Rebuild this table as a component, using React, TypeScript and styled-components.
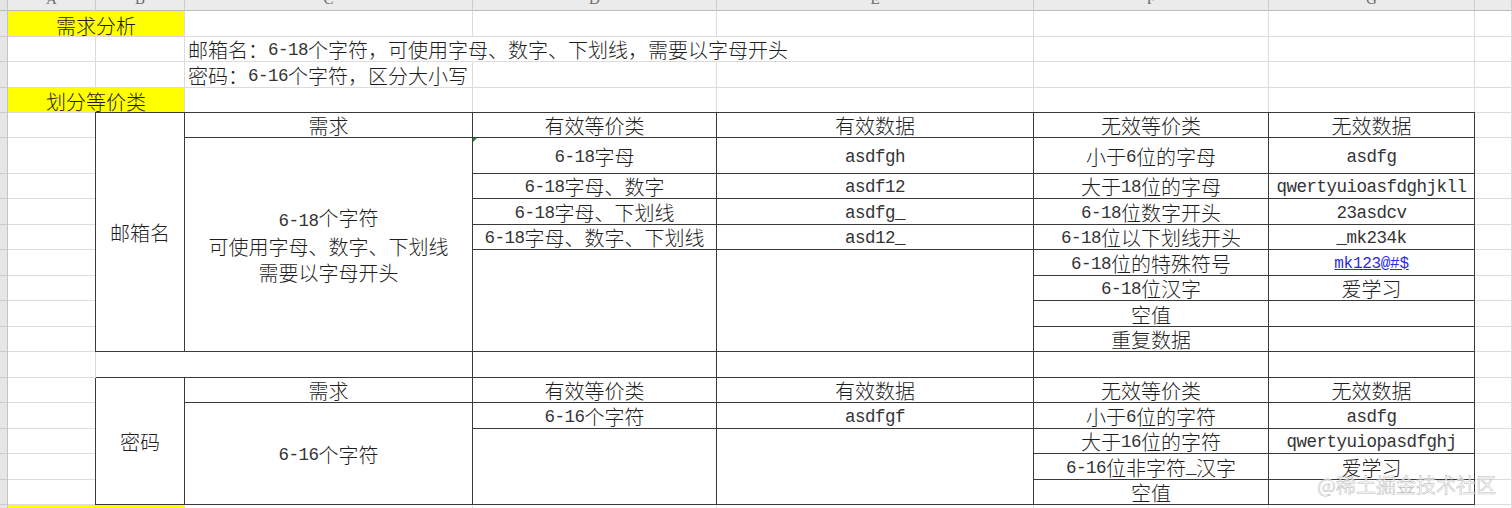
import React from 'react';
import styled, { createGlobalStyle, css } from 'styled-components';

const GlobalStyle = createGlobalStyle`
  html, body { margin: 0; padding: 0; background: #ffffff; }
  body { overflow: hidden; }
`;

const COL_WIDTHS = [8, 88, 89, 288, 244, 317, 235, 206, 37];
const ROW_HEIGHTS = [11, 26, 25, 26, 25, 25, 36, 25, 26, 25, 26, 25, 26, 25, 26, 25, 26, 25, 26, 25, 26];
const LETTERS = ['A', 'B', 'C', 'D', 'E', 'F', 'G', 'H'];
const COL: Record<string, number> = { A: 2, B: 3, C: 4, D: 5, E: 6, F: 7, G: 8, H: 9 };
const SHEET_ROWS = 20;

const LIGHT = '#dcdcdc';
const DARK = '#3a3a3a';

const Sheet = styled.div`
  position: relative;
  width: 1512px;
  height: 508px;
  overflow: hidden;
  display: grid;
  grid-template-columns: ${COL_WIDTHS.map((w) => `${w}px`).join(' ')};
  grid-template-rows: ${ROW_HEIGHTS.map((h) => `${h}px`).join(' ')};
  font-family: "Noto Sans CJK SC", "Noto Sans CJK JP", sans-serif;
  font-weight: 300;
  color: #1e1e1e;
  background: #ffffff;
`;

const Corner = styled.div`
  grid-row: 1;
  grid-column: 1;
  box-sizing: border-box;
  background: #e4e4e4;
  border-right: 1px solid #c4c4c4;
  border-bottom: 1px solid #bdbdbd;
`;

const ColHead = styled.div<{ $c: number }>`
  grid-row: 1;
  grid-column: ${(p) => p.$c};
  box-sizing: border-box;
  overflow: hidden;
  display: flex;
  justify-content: center;
  align-items: flex-start;
  background: #ebebeb;
  border-right: 1px solid #cbcbcb;
  border-bottom: 1px solid #bdbdbd;
`;

const ColLetter = styled.span`
  margin-top: -8px;
  font-family: "Liberation Serif", serif;
  font-size: 15px;
  line-height: 15px;
  color: #6a6a6a;
`;

const RowHead = styled.div<{ $r: number }>`
  grid-row: ${(p) => p.$r};
  grid-column: 1;
  box-sizing: border-box;
  background: #e6e6e6;
  border-right: 1px solid #c4c4c4;
  border-bottom: 1px solid #cdcdcd;
`;

type Kind = 'plain' | 'yellow' | 'table' | 'gap';

interface CellStyleProps {
  $r: number;
  $c: number;
  $rs: number;
  $cs: number;
  $kind: Kind;
  $top?: boolean;
  $left?: boolean;
  $align?: 'left' | 'center';
  $noRight?: boolean;
  $flag?: boolean;
}

const Cell = styled.div<CellStyleProps>`
  grid-row: ${(p) => p.$r} / span ${(p) => p.$rs};
  grid-column: ${(p) => p.$c} / span ${(p) => p.$cs};
  position: relative;
  box-sizing: border-box;
  min-width: 0;
  display: flex;
  align-items: center;
  justify-content: ${(p) => (p.$align === 'left' ? 'flex-start' : 'center')};
  text-align: ${(p) => (p.$align === 'left' ? 'left' : 'center')};
  padding: 2px 3px 0 3px;
  font-size: 20px;
  line-height: 26px;
  white-space: nowrap;
  border-right: 1px solid ${LIGHT};
  border-bottom: 1px solid ${LIGHT};
  ${(p) =>
    p.$kind === 'yellow' &&
    css`
      background: #ffff00;
      padding-top: 4px;
    `}
  ${(p) =>
    (p.$kind === 'table' || p.$kind === 'gap') &&
    css`
      border-right-color: ${DARK};
      border-bottom-color: ${DARK};
    `}
  ${(p) =>
    p.$top &&
    css`
      border-top: 1px solid ${DARK};
      margin-top: -1px;
    `}
  ${(p) =>
    p.$left &&
    css`
      border-left: 1px solid ${DARK};
      margin-left: -1px;
    `}
  ${(p) =>
    p.$noRight &&
    css`
      border-right-color: transparent;
    `}
  ${(p) =>
    p.$align === 'left' &&
    css`
      overflow: visible;
      z-index: 1;
    `}
  ${(p) =>
    p.$flag &&
    css`
      &::before {
        content: '';
        position: absolute;
        left: 0;
        top: 0;
        border-top: 4px solid #1f8a3a;
        border-right: 4px solid transparent;
      }
    `}
`;

const Latin = styled.span`
  font-family: "Liberation Mono", monospace;
  font-size: 17.5px;
  letter-spacing: -0.5px;
  font-weight: 400;
  color: #333333;
`;

const Link = styled.span`
  font-family: "Liberation Mono", monospace;
  font-size: 16px;
  letter-spacing: -0.3px;
  font-weight: 400;
  color: #2a2ae0;
  text-decoration: underline;
`;

const Lines = styled.div`
  display: flex;
  flex-direction: column;
  align-items: center;
`;

const Watermark = styled.div`
  position: absolute;
  right: 16px;
  bottom: 10px;
  z-index: 5;
  font-family: "Noto Sans CJK SC", sans-serif;
  font-size: 20px;
  line-height: 26px;
  font-weight: 400;
  color: rgba(255, 255, 255, 0.78);
  -webkit-text-stroke: 0.6px rgba(110, 110, 110, 0.45);
  pointer-events: none;
`;

function rich(text: string): React.ReactNode {
  const parts = text.split(/([\x00-\x7F]+)/).filter((s) => s.length > 0);
  return parts.map((s, i) =>
    /^[\x00-\x7F]+$/.test(s) ? <Latin key={i}>{s}</Latin> : <React.Fragment key={i}>{s}</React.Fragment>
  );
}

interface CellDef {
  row: number;
  col: string;
  rs?: number;
  cs?: number;
  kind?: Kind;
  text?: string;
  lines?: string[];
  link?: string;
  top?: boolean;
  left?: boolean;
  align?: 'left' | 'center';
  noRight?: boolean;
  flag?: boolean;
}

const T: Kind = 'table';

const tableRow = (row: number, vals: (string | undefined)[], extra: Partial<CellDef> = {}): CellDef[] =>
  vals.map((v, i) => ({ row, col: ['D', 'E', 'F', 'G'][i], kind: T, text: v, ...extra }));

const CELLS: CellDef[] = [
  { row: 1, col: 'A', cs: 2, kind: 'yellow', text: '需求分析' },
  {
    row: 2,
    col: 'C',
    align: 'left',
    noRight: true,
    text: '邮箱名：6-18个字符，可使用字母、数字、下划线，需要以字母开头',
  },
  { row: 2, col: 'D', noRight: true },
  { row: 3, col: 'C', align: 'left', text: '密码：6-16个字符，区分大小写' },
  { row: 4, col: 'A', cs: 2, kind: 'yellow', text: '划分等价类' },

  // table 1
  { row: 5, col: 'B', rs: 9, kind: T, top: true, left: true, text: '邮箱名' },
  { row: 5, col: 'C', kind: T, top: true, text: '需求' },
  ...tableRow(5, ['有效等价类', '有效数据', '无效等价类', '无效数据'], { top: true }),
  { row: 6, col: 'C', rs: 8, kind: T, lines: ['6-18个字符', '可使用字母、数字、下划线', '需要以字母开头'] },
  { row: 6, col: 'D', kind: T, text: '6-18字母', flag: true },
  { row: 6, col: 'E', kind: T, text: 'asdfgh' },
  { row: 6, col: 'F', kind: T, text: '小于6位的字母' },
  { row: 6, col: 'G', kind: T, text: 'asdfg' },
  ...tableRow(7, ['6-18字母、数字', 'asdf12', '大于18位的字母', 'qwertyuioasfdghjkll']),
  ...tableRow(8, ['6-18字母、下划线', 'asdfg_', '6-18位数字开头', '23asdcv']),
  ...tableRow(9, ['6-18字母、数字、下划线', 'asd12_', '6-18位以下划线开头', '_mk234k']),
  { row: 10, col: 'D', rs: 4, kind: T },
  { row: 10, col: 'E', rs: 4, kind: T },
  { row: 10, col: 'F', kind: T, text: '6-18位的特殊符号' },
  { row: 10, col: 'G', kind: T, link: 'mk123@#$' },
  { row: 11, col: 'F', kind: T, text: '6-18位汉字' },
  { row: 11, col: 'G', kind: T, text: '爱学习' },
  { row: 12, col: 'F', kind: T, text: '空值' },
  { row: 12, col: 'G', kind: T },
  { row: 13, col: 'F', kind: T, text: '重复数据' },
  { row: 13, col: 'G', kind: T },

  // spacer row
  { row: 14, col: 'B', cs: 2, kind: 'gap' },
  ...tableRow(14, [undefined, undefined, undefined, undefined]),

  // table 2
  { row: 15, col: 'B', rs: 5, kind: T, left: true, text: '密码' },
  { row: 15, col: 'C', kind: T, text: '需求' },
  ...tableRow(15, ['有效等价类', '有效数据', '无效等价类', '无效数据']),
  { row: 16, col: 'C', rs: 4, kind: T, text: '6-16个字符' },
  ...tableRow(16, ['6-16个字符', 'asdfgf', '小于6位的字符', 'asdfg']),
  { row: 17, col: 'D', rs: 3, kind: T },
  { row: 17, col: 'E', rs: 3, kind: T },
  { row: 17, col: 'F', kind: T, text: '大于16位的字符' },
  { row: 17, col: 'G', kind: T, text: 'qwertyuiopasdfghj' },
  { row: 18, col: 'F', kind: T, text: '6-16位非字符_汉字' },
  { row: 18, col: 'G', kind: T, text: '爱学习' },
  { row: 19, col: 'F', kind: T, text: '空值' },
  { row: 19, col: 'G', kind: T },

  { row: 20, col: 'A', cs: 2, kind: 'yellow' },
];

function buildCells(): CellDef[] {
  const taken = new Set<string>();
  CELLS.forEach((d) => {
    const c0 = COL[d.col];
    for (let r = d.row; r < d.row + (d.rs ?? 1); r++) {
      for (let c = c0; c < c0 + (d.cs ?? 1); c++) taken.add(`${r}:${c}`);
    }
  });
  const fillers: CellDef[] = [];
  for (let r = 1; r <= SHEET_ROWS; r++) {
    LETTERS.forEach((L) => {
      if (!taken.has(`${r}:${COL[L]}`)) fillers.push({ row: r, col: L });
    });
  }
  return [...fillers, ...CELLS];
}

function CellView({ d }: { d: CellDef }) {
  let content: React.ReactNode = null;
  if (d.lines) {
    content = (
      <Lines>
        {d.lines.map((l, i) => (
          <span key={i}>{rich(l)}</span>
        ))}
      </Lines>
    );
  } else if (d.link) {
    content = <Link>{d.link}</Link>;
  } else if (d.text) {
    content = rich(d.text);
  }
  return (
    <Cell
      $r={d.row + 1}
      $c={COL[d.col]}
      $rs={d.rs ?? 1}
      $cs={d.cs ?? 1}
      $kind={d.kind ?? 'plain'}
      $top={d.top}
      $left={d.left}
      $align={d.align}
      $noRight={d.noRight}
      $flag={d.flag}
    >
      {content}
    </Cell>
  );
}

export default function App() {
  const cells = buildCells();
  return (
    <>
      <GlobalStyle />
      <Sheet>
        <Corner />
        {LETTERS.map((L) => (
          <ColHead key={L} $c={COL[L]}>
            {L !== 'H' && <ColLetter>{L}</ColLetter>}
          </ColHead>
        ))}
        {Array.from({ length: SHEET_ROWS }, (_, i) => (
          <RowHead key={i} $r={i + 2} />
        ))}
        {cells.map((d) => (
          <CellView key={`${d.row}-${d.col}`} d={d} />
        ))}
        <Watermark>@稀土掘金技术社区</Watermark>
      </Sheet>
    </>
  );
}
